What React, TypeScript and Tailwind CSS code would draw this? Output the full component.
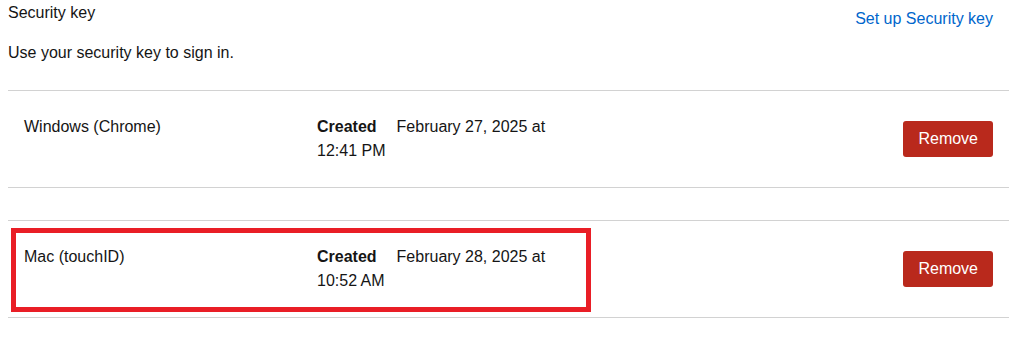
const keys = [
  { name: "Windows (Chrome)", created: "February 27, 2025 at 12:41 PM", marked: false },
  { name: "Mac (touchID)", created: "February 28, 2025 at 10:52 AM", marked: true },
];

const KeyRow = ({ name, created, marked }: { name: string; created: string; marked: boolean }) => {
  return (
    <div className="relative flex items-center border-y border-[#d2d2d2] pl-4 pr-4 pt-6 pb-6">
      <div className="flex flex-1 items-start">
        <div className="w-[293px] leading-6">{name}</div>
        <div className="w-[250px] leading-6">
          <span className="font-bold pr-5">Created</span>
          <span>{created}</span>
        </div>
      </div>
      <button className="rounded-[3px] bg-[#b9291c] px-[15px] py-1.5 leading-6 text-white">
        Remove
      </button>
      {marked && (
        <div className="pointer-events-none absolute left-[3px] top-[7px] h-[84px] w-[580px] border-[5px] border-[#e91e26]" />
      )}
    </div>
  );
};

const App = () => {
  return (
    <div
      className="min-h-screen w-full bg-white pl-2 pr-[10px] pt-px text-base text-[#151515]"
      style={{ fontFamily: '"Liberation Sans", Arial, sans-serif' }}
    >
      <div className="flex items-start justify-between pr-4">
        <h2 className="font-medium leading-6">Security key</h2>
        <a href="#" className="mt-[6px] leading-6 text-[#0066cc]">
          Set up Security key
        </a>
      </div>
      <p className="mt-[10px] leading-6">Use your security key to sign in.</p>
      <div className="mt-[25px] flex flex-col gap-8">
        {keys.map((k) => (
          <KeyRow key={k.name} {...k} />
        ))}
      </div>
    </div>
  );
};

export default App;
